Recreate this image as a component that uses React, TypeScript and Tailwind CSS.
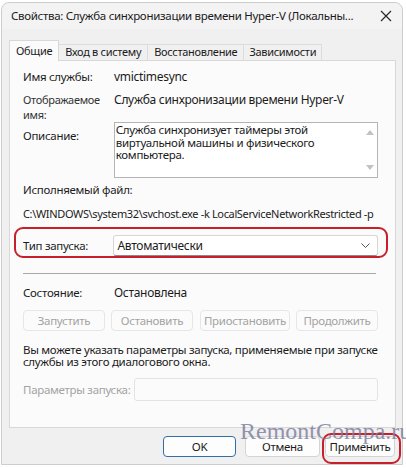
const font = { fontFamily: '"Noto Sans", "Open Sans", sans-serif' };

function Btn({ children, className = '' }: { children: React.ReactNode; className?: string }) {
  return (
    <div className={`h-[21px] flex items-center justify-center rounded-[4px] border text-[11.5px] whitespace-nowrap ${className}`}>
      {children}
    </div>
  );
}

export default function App() {
  return (
    <div className="w-[406px] h-[468px] bg-white relative overflow-hidden text-[#1b1b1b] tracking-[-0.3px]" style={font}>
      <div className="ml-[1px] mt-[2px] w-[402px] h-[463px] rounded-t-[8px] border border-[#cdcdcd] bg-[#f0f0f0] flex flex-col">
        {/* title bar */}
        <div className="h-[26px] flex items-center pl-[9px] pr-[10px] text-[11.5px] bg-[#f3f3f3] rounded-t-[8px]">
          <span className="flex-1 whitespace-nowrap">Свойства: Служба синхронизации времени Hyper-V (Локальны...</span>
          <svg width="12" height="12" viewBox="0 0 12 12" className="ml-2 shrink-0">
            <path d="M1 1L11 11M11 1L1 11" stroke="#222" strokeWidth="1.1" />
          </svg>
        </div>

        {/* tabs */}
        <div className="mt-[11px] ml-[7px] flex items-end h-[20px] text-[11px] relative z-10">
          <div className="h-[21px] -mb-[1px] px-[6px] flex items-center bg-[#fbfbfb] border border-b-0 border-[#d8d8d8]">Общие</div>
          <div className="h-[16px] px-[6px] flex items-center border-t border-r border-[#dcdcdc]">Вход в систему</div>
          <div className="h-[16px] px-[6px] flex items-center border-t border-r border-[#dcdcdc]">Восстановление</div>
          <div className="h-[16px] px-[5px] flex items-center border-t border-r border-[#dcdcdc]">Зависимости</div>
        </div>

        {/* panel */}
        <div className="ml-[7px] w-[387px] h-[368px] bg-[#fbfbfb] border border-[#d8d8d8] pl-[13px] pr-[17px] text-[12px] leading-[15px]">
          <div className="flex mt-[8px]">
            <div className="w-[91px] text-[11.5px]">Имя службы:</div>
            <div>vmictimesync</div>
          </div>
          <div className="flex mt-[8px]">
            <div className="w-[91px] text-[11px] text-[#333]">Отображаемое<br />имя:</div>
            <div>Служба синхронизации времени Hyper-V</div>
          </div>
          <div className="flex">
            <div className="w-[91px] pt-[6px] text-[11.5px]">Описание:</div>
            <div className="w-[265px] h-[56px] border border-[#b4b4b4] bg-white flex">
              <div className="flex-1 pl-[1px] pt-[1px] leading-[12.5px] text-[11.5px]">
                Служба синхронизует таймеры этой виртуальной машины и физического компьютера.
              </div>
              <div className="w-[14px] flex flex-col justify-between items-center py-[7px]">
                <svg width="8" height="5" viewBox="0 0 8 5"><path d="M0 5L4 0L8 5Z" fill="#c2c2c2" /></svg>
                <svg width="8" height="5" viewBox="0 0 8 5"><path d="M0 0L8 0L4 5Z" fill="#c2c2c2" /></svg>
              </div>
            </div>
          </div>
          <div className="mt-[4px] text-[11.5px]">Исполняемый файл:</div>
          <div className="mt-[9px] whitespace-nowrap text-[11px] tracking-[-0.35px]">
            C:\WINDOWS\system32\svchost.exe -k LocalServiceNetworkRestricted -p
          </div>
          <div className="flex items-center mt-[14px]">
            <div className="w-[91px] text-[11.5px]">Тип запуска:</div>
            <div className="w-[266px] h-[21px] bg-white border border-[#d6d6d6] border-b-[#8a8a8a] rounded-[3px] flex items-center pl-[3px] pr-[7px]">
              <span className="flex-1">Автоматически</span>
              <svg width="9" height="6" viewBox="0 0 9 6"><path d="M0.5 0.5L4.5 4.5L8.5 0.5" stroke="#555" fill="none" /></svg>
            </div>
          </div>
          <div className="mt-[17px] h-px bg-[#a8a8a8] w-[353px]" />
          <div className="flex mt-[11px]">
            <div className="w-[91px] text-[11.5px]">Состояние:</div>
            <div>Остановлена</div>
          </div>
          <div className="flex mt-[10px] text-[#a3a3a3]">
            <Btn className="w-[82px] border-[#e6e6e6] bg-[#fbfbfb]">Запустить</Btn>
            <Btn className="w-[82px] ml-[6px] border-[#e6e6e6] bg-[#fbfbfb]">Остановить</Btn>
            <Btn className="w-[90px] ml-[7px] border-[#e6e6e6] bg-[#fbfbfb]">Приостановить</Btn>
            <Btn className="w-[82px] ml-[6px] border-[#e6e6e6] bg-[#fbfbfb]">Продолжить</Btn>
          </div>
          <div className="mt-[13px] leading-[12px] text-[11.5px] w-[357px]">
            Вы можете указать параметры запуска, применяемые при запуске службы из этого диалогового окна.
          </div>
          <div className="flex items-center mt-[10px]">
            <div className="w-[111px] text-[11.5px] text-[#a3a3a3] whitespace-nowrap">Параметры запуска:</div>
            <div className="w-[245px] h-[23px] border border-[#e3e3e3] bg-[#fbfbfb] rounded-[3px]" />
          </div>
        </div>

        {/* dialog buttons */}
        <div className="flex mt-[8px] pl-[161px]">
          <Btn className="w-[73px] border-[#2f6fa8] bg-[#fdfdfd]">OK</Btn>
          <Btn className="w-[75px] ml-[9px] border-[#d4d4d4] bg-[#fdfdfd]">Отмена</Btn>
          <Btn className="w-[70px] ml-[5px] border-[#d4d4d4] bg-[#fdfdfd]">Применить</Btn>
        </div>
      </div>

      {/* red highlights */}
      <div className="absolute left-[14px] top-[227px] w-[374px] h-[31px] rounded-[9px] border-[2.5px] border-[#c8202a]" />
      <div className="absolute left-[322px] top-[433px] w-[79px] h-[31px] rounded-[9px] border-[2.5px] border-[#c8202a]" />

      {/* watermark */}
      <div
        className="absolute left-[240px] top-[419px] text-[24px] leading-[24px] tracking-normal text-[#7b7b9c] opacity-80 pointer-events-none"
        style={{ fontFamily: '"Liberation Serif", serif' }}
      >
        RemontCompa.ru
      </div>
    </div>
  );
}
